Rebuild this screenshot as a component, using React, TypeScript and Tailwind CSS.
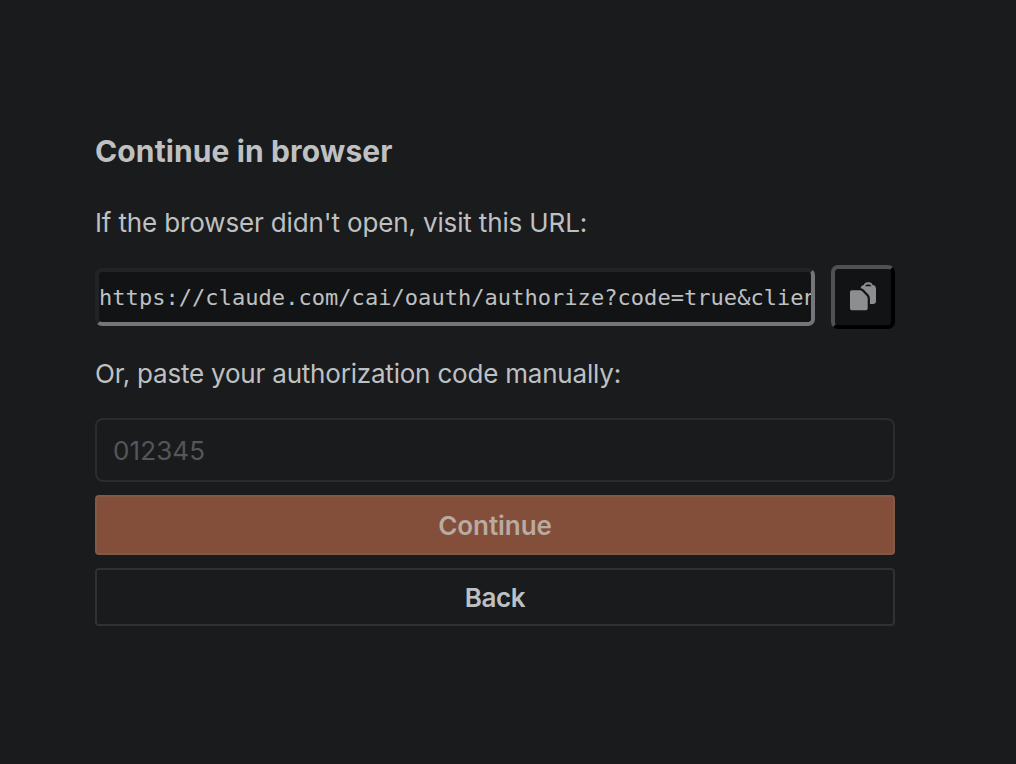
const AUTH_URL = 'https://claude.com/cai/oauth/authorize?code=true&client_id=';

function CopyIcon() {
  return (
    <svg width="26" height="30" viewBox="0 0 26 30" fill="currentColor" aria-hidden="true">
      <path d="M1.800 8.300h7.700c1.200 0 2.200.4 3 1.200l4 4.300c.8.800 1.200 1.800 1.200 3v9.600a1.800 1.800 0 0 1-1.800 1.800H1.800A1.800 1.800 0 0 1 0 26.400V10.100a1.800 1.800 0 0 1 1.800-1.800Z" />
      <path
        fillRule="evenodd"
        d="M10.800 5.600c.4-1.500 1.500-2.300 3-2.500C14.500 1.200 15.800.300 17.300.300h1.900c1.500 0 2.800.9 3.400 2.800 2 .2 3.400 1.500 3.400 3.500v12.400a3 3 0 0 1-3 3h-3.100v-5.200c0-1.700-.6-3.300-1.800-4.500l-4-4.300c-.9-1-2-1.600-3.300-1.800ZM15.300 4.300h6c-.3-1.200-1-1.900-2.100-1.900h-1.900c-1 0-1.700.7-2 1.900Z"
      />
    </svg>
  );
}

export default function App() {
  return (
    <main className="h-screen w-full overflow-hidden bg-[#1a1b1d] pl-[95px] pt-[130px] font-['Inter',sans-serif] text-[#bfc0c2]">
      <div className="flex w-[800px] flex-col">
        <h1 className="h-[42px] whitespace-nowrap text-[30px] font-bold leading-[42px] tracking-[0.12px]">Continue in browser</h1>
        <p className="mt-[31px] h-10 whitespace-nowrap text-[26px] leading-10 tracking-[-0.14px]">
          If the browser didn't open, visit this URL:
        </p>

        <div className="mt-[22px] flex h-16 items-center gap-4">
          <input
            readOnly
            value={AUTH_URL}
            className="h-[58px] min-w-0 flex-1 rounded-[7px] border-4 border-t-[#222325] border-r-[#757679] border-b-[#757679] border-l-[#222325] bg-[#121315] font-['DejaVu_Sans_Mono',monospace] text-[22px] tracking-[0.05px] outline-none"
          />
          <button
            aria-label="Copy URL"
            className="flex size-16 items-center justify-center rounded-[7px] border-4 border-t-[#505153] border-r-black border-b-black border-l-[#505153] bg-[#121315] text-[#8d8e90]"
          >
            <CopyIcon />
          </button>
        </div>

        <p className="mt-[25px] h-10 whitespace-nowrap text-[26px] leading-10 tracking-[-0.2px]">
          Or, paste your authorization code manually:
        </p>

        <input
          placeholder="012345"
          className="mt-6 h-16 w-full rounded-lg border-2 border-[#2a2d2f] bg-transparent px-4 text-[26px] tracking-[0.1px] outline-none placeholder:text-[#555658]"
        />
        <button className="mt-[13px] h-[60px] rounded-[4px] border-2 border-[#835846] bg-[#834f3a] text-[26px] font-semibold tracking-[-0.05px] text-[#b9aaa2]">
          Continue
        </button>
        <button className="mt-[13px] h-[58px] rounded-[4px] border-2 border-[#303133] text-[26px] font-semibold tracking-[-0.4px]">Back</button>
      </div>
    </main>
  );
}
